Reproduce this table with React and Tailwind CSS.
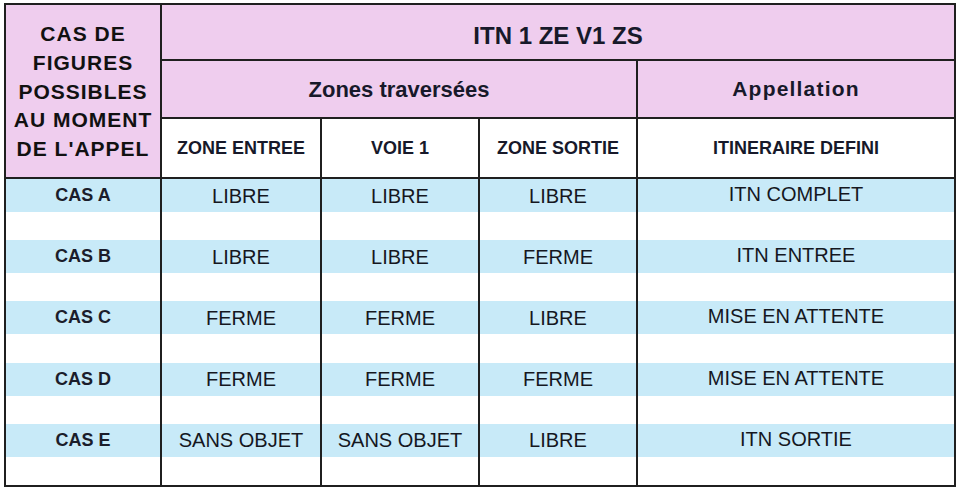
import React from "react";

const rows = [
  ["CAS A", "LIBRE", "LIBRE", "LIBRE", "ITN COMPLET"],
  ["CAS B", "LIBRE", "LIBRE", "FERME", "ITN ENTREE"],
  ["CAS C", "FERME", "FERME", "LIBRE", "MISE EN ATTENTE"],
  ["CAS D", "FERME", "FERME", "FERME", "MISE EN ATTENTE"],
  ["CAS E", "SANS OBJET", "SANS OBJET", "LIBRE", "ITN SORTIE"],
];

const cols = "grid grid-cols-[156px_160px_158px_158px_1fr]";

function DataRow({ r }) {
  return (
    <>
      <div className={`${cols} flex-1 bg-[#c8eaf8]`}>
        <div className="border-r-2 border-[#1f1f1f] flex items-center justify-center text-[18px] font-bold text-[#1b1d2b]">
          {r[0]}
        </div>
        <div className="border-r-2 border-[#1f1f1f] flex items-center justify-center text-[20px] text-[#15171f]">{r[1]}</div>
        <div className="border-r-2 border-[#1f1f1f] flex items-center justify-center text-[20px] text-[#15171f]">{r[2]}</div>
        <div className="border-r-2 border-[#1f1f1f] flex items-center justify-center text-[20px] text-[#15171f]">{r[3]}</div>
        <div className="flex items-center justify-center text-[20px] text-[#15171f] pb-[3px]">{r[4]}</div>
      </div>
      <div className={`${cols} flex-1 bg-white`}>
        <div className="border-r-2 border-[#1f1f1f]" />
        <div className="border-r-2 border-[#1f1f1f]" />
        <div className="border-r-2 border-[#1f1f1f]" />
        <div className="border-r-2 border-[#1f1f1f]" />
        <div />
      </div>
    </>
  );
}

export default function App() {
  return (
    <div className="w-[960px] h-[490px] bg-white pt-[3px] pl-[4px] font-['Liberation_Sans',Arial,sans-serif]">
      <div className="w-[952px] h-[484px] border-2 border-[#1f1f1f] flex flex-col">
        {/* header */}
        <div className={`${cols} grid-rows-[56px_58px_58px] border-b-2 border-[#1f1f1f] bg-[#efcdee]`}>
          <div className="row-span-3 border-r-2 border-[#1f1f1f] flex flex-col items-center justify-center pt-[2px] text-[21px] leading-[28.7px] font-bold tracking-[1px] text-[#111]">
            <span>CAS DE</span>
            <span>FIGURES</span>
            <span>POSSIBLES</span>
            <span>AU MOMENT</span>
            <span>DE L'APPEL</span>
          </div>
          <div className="col-span-4 border-b-2 border-[#1f1f1f] flex items-end justify-center pb-[5px] text-[24px] font-bold text-[#17192a]">
            ITN 1 ZE V1 ZS
          </div>
          <div className="col-span-3 border-r-2 border-b-2 border-[#1f1f1f] flex items-center justify-center text-[22px] font-bold text-[#17192a]">
            Zones traversées
          </div>
          <div className="border-b-2 border-[#1f1f1f] flex items-center justify-center text-[21px] font-bold tracking-[1.2px] text-[#17192a]">
            Appellation
          </div>
          <div className="bg-white border-r-2 border-[#1f1f1f] flex items-center justify-center text-[18px] font-bold text-[#17192a]">
            ZONE ENTREE
          </div>
          <div className="bg-white border-r-2 border-[#1f1f1f] flex items-center justify-center text-[18px] font-bold text-[#17192a]">
            VOIE 1
          </div>
          <div className="bg-white border-r-2 border-[#1f1f1f] flex items-center justify-center text-[18px] font-bold text-[#17192a]">
            ZONE SORTIE
          </div>
          <div className="bg-white flex items-center justify-center text-[18px] font-bold text-[#17192a]">
            ITINERAIRE DEFINI
          </div>
        </div>
        {/* data */}
        <div className="flex-1 flex flex-col">
          {rows.map((r) => (
            <DataRow key={r[0]} r={r} />
          ))}
        </div>
      </div>
    </div>
  );
}
